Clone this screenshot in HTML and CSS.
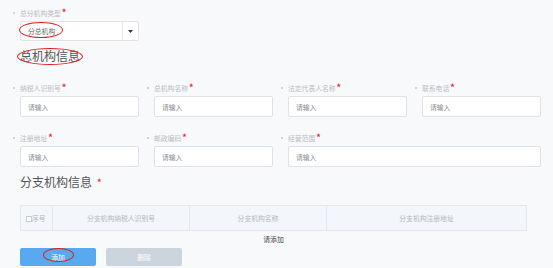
FILE: index.html
```html
<!DOCTYPE html>
<html>
  <head>
    <meta charset="UTF-8" />
    <title>机构信息</title>
    <link rel="stylesheet" href="styles.css">
  </head>

  <body>
    <div class="page">
      <div class="field">
        <label class="field-label">总分机构类型<span class="req">*</span></label>
        <div class="select">
          <span class="select-value">分总机构</span>
          <span class="select-arrow">
            <svg width="5" height="3" viewBox="0 0 5 3"><path d="M0 0h5L2.5 3z" fill="#333"/></svg>
          </span>
        </div>
      </div>

      <h2 class="section-title">总机构信息</h2>

      <div class="form-grid">
        <div class="field">
          <label class="field-label">纳税人识别号<span class="req">*</span></label>
          <input class="input" type="text" placeholder="请输入" />
        </div>
        <div class="field">
          <label class="field-label">总机构名称<span class="req">*</span></label>
          <input class="input" type="text" placeholder="请输入" />
        </div>
        <div class="field">
          <label class="field-label">法定代表人名称<span class="req">*</span></label>
          <input class="input" type="text" placeholder="请输入" />
        </div>
        <div class="field">
          <label class="field-label">联系电话<span class="req">*</span></label>
          <input class="input" type="text" placeholder="请输入" />
        </div>
        <div class="field">
          <label class="field-label">注册地址<span class="req">*</span></label>
          <input class="input" type="text" placeholder="请输入" />
        </div>
        <div class="field">
          <label class="field-label">邮政编码<span class="req">*</span></label>
          <input class="input" type="text" placeholder="请输入" />
        </div>
        <div class="field field-wide">
          <label class="field-label">经营范围<span class="req">*</span></label>
          <input class="input" type="text" placeholder="请输入" />
        </div>
      </div>

      <h2 class="section-title section-title-2">分支机构信息 <span class="req">*</span></h2>

      <table class="branch-table">
        <thead>
          <tr>
            <th class="col-no"><span class="checkbox"></span>序号</th>
            <th class="col-tax">分支机构纳税人识别号</th>
            <th class="col-name">分支机构名称</th>
            <th>分支机构注册地址</th>
          </tr>
        </thead>
      </table>
      <div class="empty">请添加</div>

      <div class="actions">
        <button class="btn btn-primary">添加</button>
        <button class="btn btn-disabled">删除</button>
      </div>

      <!-- 红色圈注 -->
      <span class="mark mark-type"></span>
      <span class="mark mark-title"></span>
      <span class="mark mark-add"></span>
    </div>
  </body>
</html>
```

FILE: styles.css
```css
html,
body {
  margin: 0;
  background: #f8f9fb;
}

.page {
  position: relative;
  padding: 8px 0 0 20px;
  font-family: "Noto Sans CJK SC", "Noto Sans", sans-serif;
  color: #555;
  height: 260px;
  overflow: hidden;
}

.field {
  width: 119px;
}

.field-label {
  display: block;
  position: relative;
  font-size: 6.8px;
  line-height: 10px;
  height: 10px;
  color: #b9bcc2;
  margin-bottom: 3px;
}

.field-label::before {
  content: "";
  position: absolute;
  left: -7px;
  top: 4px;
  width: 2px;
  height: 2px;
  border-radius: 50%;
  background: #c4c7cc;
}

.req {
  color: #f5222d;
  font-size: 9px;
  font-weight: bold;
  margin-left: 1px;
}

.select {
  display: flex;
  height: 20px;
  box-sizing: border-box;
  background: white;
  border: 1px solid #e1e4e8;
  border-radius: 2px;
}

.select-value {
  flex: 1;
  font-size: 6.8px;
  line-height: 18px;
  padding-left: 7px;
  color: #666;
}

.select-arrow {
  width: 15px;
  border-left: 1px solid #e6e8ec;
  display: flex;
  align-items: center;
  justify-content: center;
}

.section-title {
  margin: 7px 0 19px;
  font-size: 12px;
  line-height: 16px;
  font-weight: normal;
  color: #555;
}

.section-title-2 {
  margin: 7px 0 15px;
}

.section-title .req {
  font-size: 11px;
  font-weight: normal;
  margin-left: 2px;
}

.form-grid {
  display: grid;
  grid-template-columns: repeat(4, 119px);
  column-gap: 15px;
  row-gap: 16px;
}

.field-wide {
  width: auto;
  grid-column: span 2;
}

.input {
  display: block;
  width: 100%;
  height: 21px;
  box-sizing: border-box;
  margin: 0;
  border: 1px solid #dfe2e6;
  border-radius: 2px;
  background: white;
  padding: 0 7px;
  font-family: inherit;
  font-size: 6.8px;
}

.input::placeholder {
  color: #8a8d92;
}

.branch-table {
  width: 507px;
  border-collapse: collapse;
  background: #f3f6fb;
}

.branch-table th {
  height: 24px;
  padding: 0;
  border: 1px solid #e4e8ee;
  font-size: 6.8px;
  font-weight: normal;
  color: #b4b8bf;
}

.branch-table .col-no {
  width: 32px;
  text-align: left;
  padding-left: 5px;
  box-sizing: border-box;
}

.branch-table .col-tax,
.branch-table .col-name {
  width: 136px;
}

.checkbox {
  display: inline-block;
  width: 4px;
  height: 4px;
  border: 1px solid #c9cdd3;
  background: white;
  vertical-align: -1px;
}

.empty {
  width: 507px;
  text-align: center;
  font-size: 6.8px;
  line-height: 10px;
  color: #444;
  margin-top: 3px;
}

.actions {
  display: flex;
  gap: 10px;
  margin-top: 4px;
}

.btn {
  width: 76px;
  height: 18px;
  border: none;
  border-radius: 2px;
  font-family: inherit;
  font-size: 6.8px;
  color: white;
  padding: 0;
}

.btn-primary {
  background: #58a9f0;
}

.btn-disabled {
  background: #ccd4dd;
}

.mark {
  position: absolute;
  border: 1px solid #e0201c;
  border-radius: 50%;
}

.mark-type {
  left: 19px;
  top: 22px;
  width: 42px;
  height: 14px;
}

.mark-title {
  left: 17px;
  top: 48px;
  width: 64px;
  height: 15px;
  border-width: 1.3px;
}

.mark-add {
  left: 43px;
  top: 248px;
  width: 29px;
  height: 12px;
}
```
